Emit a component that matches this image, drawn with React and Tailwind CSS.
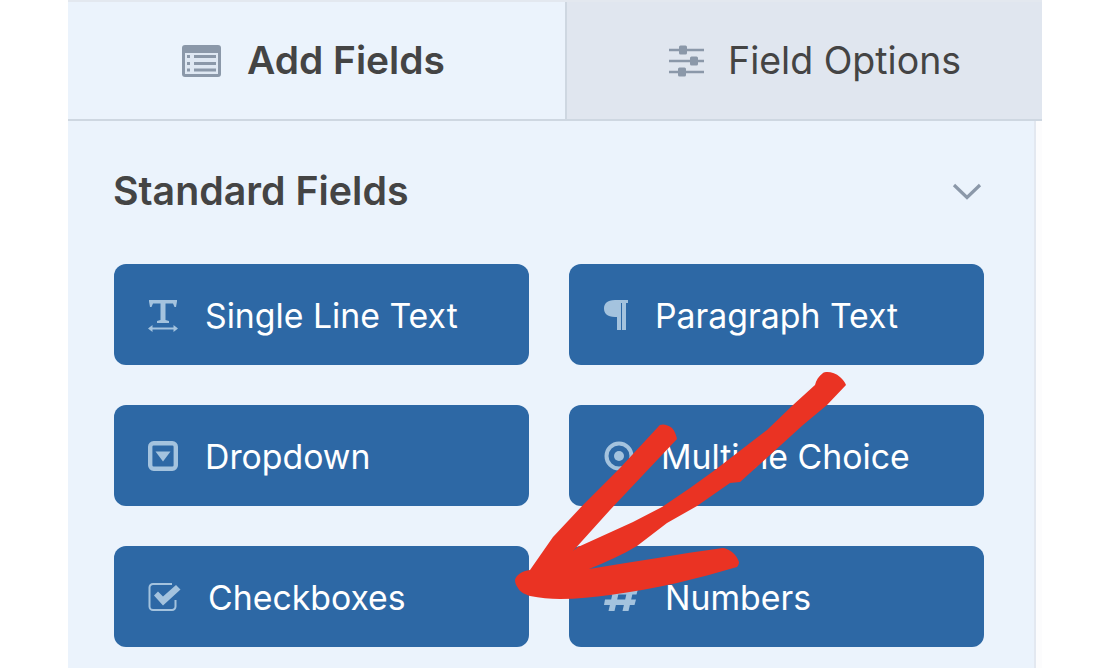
const iconColor = "#a4c3de";

const TextIcon = () => (
  <svg width="32" height="36" viewBox="0 0 32 36" fill="none">
    <path d="M2 3h28v1.500l-1 5.500h-1.500L26 6.500H18.500V23l3.500 1v2H10v-2l3.500-1V6.500H6L4.500 10H3L2 4.500z" fill={iconColor} />
    <path d="M3 31.500h26" stroke={iconColor} strokeWidth="2" />
    <path d="M1 31.500l4.500-3.500v7zM31 31.500l-4.500-3.500v7z" fill={iconColor} />
  </svg>
);

const ParagraphIcon = () => (
  <svg width="26" height="32" viewBox="0 0 26 32" fill="none">
    <path d="M12 1h13v3h-2v27h-4V4h-1v27h-4V18h-2C4 18 1 14 1 9.500S4 1 12 1z" fill={iconColor} />
  </svg>
);

const DropdownIcon = () => (
  <svg width="30" height="30" viewBox="0 0 30 30" fill="none">
    <rect x="2.200" y="2.200" width="25.600" height="25.600" rx="3.500" stroke={iconColor} strokeWidth="4.400" />
    <path d="M7.500 10.500h15L15 20.500z" fill={iconColor} />
  </svg>
);

const RadioIcon = () => (
  <svg width="30" height="30" viewBox="0 0 30 30" fill="none">
    <circle cx="15" cy="15" r="12.500" stroke={iconColor} strokeWidth="4" />
    <circle cx="15" cy="15" r="5" fill={iconColor} />
  </svg>
);

const CheckIcon = () => (
  <svg width="33" height="28" viewBox="0 0 33 28" fill="none">
    <path d="M24 1H5a3.500 3.500 0 0 0-3.500 3.500v19A3.500 3.500 0 0 0 5 27h19a3.500 3.500 0 0 0 3.500-3.500V17" stroke={iconColor} strokeWidth="2" />
    <path d="M6 12.500l4-4 5 5L28 2l4.500 4.500L15 22.500z" fill={iconColor} />
  </svg>
);

const HashIcon = () => (
  <svg width="34" height="28" viewBox="0 0 34 28" fill="none">
    <path d="M11 0h6l-6.500 28h-6zM25 0h6l-6.500 28h-6zM3 6h31l-1.500 5.500H1.500zM1 16.500h31L30.500 22H0z" fill={iconColor} />
  </svg>
);

const fields = [
  { label: "Single Line Text", icon: <TextIcon />, gapClass: "gap-[26px]", padClass: "pl-[33px]" },
  { label: "Paragraph Text", icon: <ParagraphIcon />, gapClass: "gap-[26px]", padClass: "pl-[34px]" },
  { label: "Dropdown", icon: <DropdownIcon />, gapClass: "gap-[27px]", padClass: "pl-[34px]" },
  { label: "Multiple Choice", icon: <RadioIcon />, gapClass: "gap-[27px]", padClass: "pl-[35px]" },
  { label: "Checkboxes", icon: <CheckIcon />, gapClass: "gap-[27px]", padClass: "pl-[34px]" },
  { label: "Numbers", icon: <HashIcon />, gapClass: "gap-[27px]", padClass: "pl-[35px]" },
];

export default function App() {
  return (
    <div className="relative h-[668px] w-[1113px] overflow-hidden bg-white pl-[68px] font-['Inter',sans-serif] text-[#444444]">
      <div className="h-full w-[974px] bg-[#fcfcfd]">
        <div className="flex h-[121px] border-t-2 border-b-2 border-t-[#e3e8ef] border-b-[#ced7e1]">
          <div className="flex w-[497px] items-center gap-[26px] bg-[#ebf3fc] pl-[114px]">
            <svg width="39" height="32" viewBox="0 0 39 32" fill="none">
              <rect width="39" height="32" rx="3" fill="#8b98a9" />
              <rect x="3" y="8" width="33" height="21" fill="#dfe8f3" />
              <path d="M12 11.500h22M12 18.500h22M12 25h22" stroke="#8b98a9" strokeWidth="3" />
              <path d="M5 11.500h3M5 18.500h3M5 25h3" stroke="#8b98a9" strokeWidth="3" />
            </svg>
            <span className="text-[38.900px] font-semibold leading-none">Add Fields</span>
          </div>
          <div className="flex flex-1 items-center gap-[24px] border-l-2 border-l-[#ced7e1] bg-[#e0e6ef] pl-[102px]">
            <svg width="35" height="32" viewBox="0 0 35 32" fill="none">
              <path d="M0 5h35M0 16h35M0 27h35" stroke="#8b98a9" strokeWidth="2.500" />
              <rect x="10" y="0.500" width="8" height="9" rx="1.500" fill="#8b98a9" />
              <rect x="21" y="11.500" width="8" height="9" rx="1.500" fill="#8b98a9" />
              <rect x="9" y="22.500" width="8" height="9" rx="1.500" fill="#8b98a9" />
            </svg>
            <span className="text-[37.500px] font-normal leading-none">Field Options</span>
          </div>
        </div>

        <div className="h-[547px] w-[968px] border-r-2 border-r-[#e3e8f0] bg-[#ebf3fc] pl-[46px] pr-[52px]">
          <div className="flex h-[143px] items-center justify-between pb-[4px]">
            <h2 className="-ml-px text-[39.300px] font-semibold leading-none">Standard Fields</h2>
            <svg width="30" height="18" viewBox="0 0 30 18" fill="none">
              <path d="M2 3l13 12.500L28 3" stroke="#8b98a9" strokeWidth="3.200" />
            </svg>
          </div>
          <div className="grid grid-cols-[415px_415px] gap-x-10 gap-y-10">
            {fields.map((field) => (
              <div
                key={field.label}
                className={`flex h-[101px] items-center rounded-xl bg-[#2d68a5] text-[33.800px] leading-none text-white ${field.gapClass} ${field.padClass}`}
              >
                <span className="flex shrink-0 items-center">{field.icon}</span>
                <span className="pt-[2px]">{field.label}</span>
              </div>
            ))}
          </div>
        </div>
      </div>

      {/* hand-drawn arrow lying over the buttons */}
      <svg className="absolute left-0 top-0" width="1113" height="668" viewBox="0 0 1113 668" fill="none">
        <path
          d="M515 580 C516 575 522 571 530 570 L553 537 L583 505 L620 468 L658 427 C660 423 667 424 672 428 C675 431 676 435 677 439 L643 475 L610 510 L573 551 L578 547 L600 537 L633 522 L662 507 L690 488 L715 470 L750 443 L767 430 L793 405 L815 385 C816 380 819 376 823 373 C826 371 835 372 840 377 C843 380 845 382 846 385 L827 405 L803 425 L770 455 L750 473 L740 482 L730 483 L697 506 L667 523 L637 546 C622 555 606 562 589 569 C634 562 678 554 723 548 C730 549 737 555 739 562 C739 564 738 566 737 567 C717 573 697 578 677 583 C655 588 632 592 610 595 C594 597 577 599 560 599 C550 599 540 598 530 596 C524 594 519 591 518 588 C516 585 515 583 515 580 Z"
          fill="#ea3323"
        />
      </svg>
    </div>
  );
}
